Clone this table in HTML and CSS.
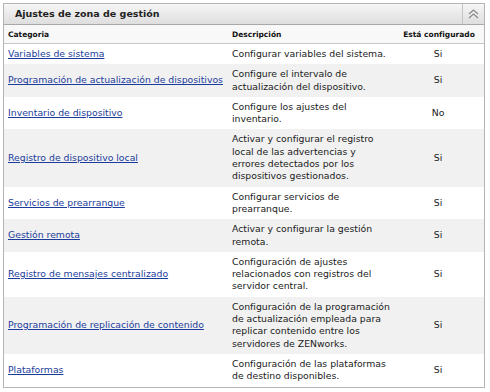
FILE: index.html
```html
<!DOCTYPE html>
<html lang="es">
<head>
  <meta charset="UTF-8">
  <title>Ajustes de zona de gestión</title>
  <link rel="stylesheet" href="styles.css">
</head>
<body>
  <div class="panel">
    <div class="panel-header">
      <span class="panel-title">Ajustes de zona de gestión</span>
      <button class="collapse-btn" title="Contraer">
        <svg width="11" height="10" viewBox="0 0 11 10">
          <polyline points="1,5 5.5,1 10,5" fill="none" stroke="#8a8a8a" stroke-width="1.2"/>
          <polyline points="1,9 5.5,5 10,9" fill="none" stroke="#8a8a8a" stroke-width="1.2"/>
        </svg>
      </button>
    </div>

    <table class="table">
      <thead>
        <tr>
          <th class="col-cat">Categoria</th>
          <th class="col-desc">Descripción</th>
          <th class="col-conf">Está configurado</th>
        </tr>
      </thead>
      <tbody>
        <tr>
          <td class="cat"><a href="#">Variables de sistema</a></td>
          <td>Configurar variables del sistema.</td>
          <td class="conf">Si</td>
        </tr>
        <tr>
          <td class="cat"><a href="#">Programación de actualización de dispositivos</a></td>
          <td>Configure el intervalo de actualización del dispositivo.</td>
          <td class="conf">Si</td>
        </tr>
        <tr>
          <td class="cat"><a href="#">Inventario de dispositivo</a></td>
          <td>Configure los ajustes del inventario.</td>
          <td class="conf">No</td>
        </tr>
        <tr>
          <td class="cat"><a href="#">Registro de dispositivo local</a></td>
          <td>Activar y configurar el registro local de las advertencias y errores detectados por los dispositivos gestionados.</td>
          <td class="conf">Si</td>
        </tr>
        <tr>
          <td class="cat"><a href="#">Servicios de prearranque</a></td>
          <td>Configurar servicios de prearranque.</td>
          <td class="conf">Si</td>
        </tr>
        <tr>
          <td class="cat"><a href="#">Gestión remota</a></td>
          <td>Activar y configurar la gestión remota.</td>
          <td class="conf">Si</td>
        </tr>
        <tr>
          <td class="cat"><a href="#">Registro de mensajes centralizado</a></td>
          <td>Configuración de ajustes relacionados con registros del servidor central.</td>
          <td class="conf">Si</td>
        </tr>
        <tr>
          <td class="cat"><a href="#">Programación de replicación de contenido</a></td>
          <td>Configuración de la programación de actualización empleada para replicar contenido entre los servidores de ZENworks.</td>
          <td class="conf">Si</td>
        </tr>
        <tr>
          <td class="cat"><a href="#">Plataformas</a></td>
          <td>Configuración de las plataformas de destino disponibles.</td>
          <td class="conf">Si</td>
        </tr>
      </tbody>
    </table>
  </div>
</body>
</html>
```

FILE: styles.css
```css
body {
  font-family: "DejaVu Sans", Verdana, sans-serif;
  background-color: #fff;
  color: #1a1a1a;
  margin: 0;
  padding: 0;
}
.panel {
  margin: 3px 5px 0 3px;
  border: 1px solid #b4b4b4;
}
.panel-header {
  display: flex;
  align-items: stretch;
  height: 20px;
  background: linear-gradient(#f6f6f6, #dedede);
  border-bottom: 1px solid #a8a8a8;
}
.panel-title {
  flex: 1;
  padding-left: 11px;
  font-size: 9.5px;
  font-weight: bold;
  line-height: 20px;
  color: #222;
}
.collapse-btn {
  width: 22px;
  padding: 0;
  border: none;
  border-left: 1px solid #c4c4c4;
  background: transparent;
  display: flex;
  align-items: center;
  justify-content: center;
  cursor: pointer;
}
.table {
  width: 100%;
  border-collapse: collapse;
  table-layout: fixed;
  font-size: 9.3px;
}
.table th {
  font-size: 7.5px;
  font-weight: bold;
  text-align: left;
  padding: 0 4px;
  height: 18px;
  background-color: #f8f8f8;
  border-bottom: 1px solid #c8c8c8;
  color: #111;
}
.table .col-cat {
  width: 216px;
}
.table .col-desc {
  width: 158px;
}
.table .col-conf {
  text-align: center;
  padding: 0 2px;
}
.table td {
  padding: 4px 4px;
  line-height: 12.3px;
  vertical-align: middle;
}
.table tbody tr:nth-child(even) {
  background-color: #f1f1f1;
}
.table .cat {
  white-space: nowrap;
}
.table .cat a {
  color: #1c3c9c;
  text-decoration: underline;
}
.table .conf {
  text-align: center;
  padding-right: 6px;
}
```
